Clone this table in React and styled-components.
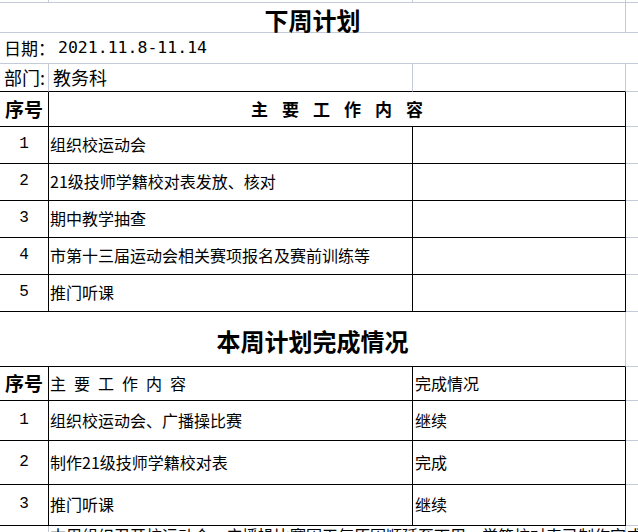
import React from 'react';
import styled, { createGlobalStyle } from 'styled-components';

const GRID = '#c5cad8';
const INK = '#000';

const GlobalStyle = createGlobalStyle`
  html, body {
    margin: 0;
    padding: 0;
    overflow: hidden;
    background: #fff;
  }
  body {
    font-family: "Noto Sans CJK SC", "Noto Sans", sans-serif;
    color: #000;
  }
`;

const edge = (v) => (v === 'k' ? `1px solid ${INK}` : v === 'g' ? `1px solid ${GRID}` : 'none');

// columns A | B | C | D of the sheet, rows at their sheet heights
const Sheet = styled.div`
  display: grid;
  grid-template-columns: 49px 364px 213px 1fr;
  grid-template-rows: 3px 30px 31px 28px 35px repeat(5, 37px) 55px 34px 40px 44px 41px 7px;
  width: 638px;
  height: 532px;
  overflow: hidden;
`;

const Cell = styled.div`
  box-sizing: border-box;
  grid-column: span ${(p) => p.$span || 1};
  border-right: ${(p) => edge(p.$r)};
  border-bottom: ${(p) => edge(p.$b)};
  display: flex;
  align-items: center;
  min-width: 0;
  overflow: hidden;
  white-space: nowrap;
  font-size: 16px;
  line-height: 1.2;
`;

const Filler = styled(Cell)``;

const SheetTitle = styled(Cell)`
  justify-content: center;
  padding-top: ${(p) => p.$top || 0}px;
  overflow: visible;
  font-size: 24px;
  font-weight: 700;
  line-height: 1.3;
`;

const InfoCell = styled(Cell)`
  padding-left: ${(p) => p.$pad || 0}px;
  font-size: ${(p) => p.$size || 17}px;
`;

const DateText = styled.span`
  margin-left: 3px;
  font-family: "DejaVu Sans Mono", "Liberation Mono", monospace;
  font-size: 16.5px;
`;

const HeadCell = styled(Cell)`
  justify-content: center;
  font-size: 19px;
  font-weight: 700;
`;

const SpacedHead = styled(HeadCell)`
  padding-left: 14px;
  font-size: 17px;
  letter-spacing: 14px;
`;

const PlainHead = styled(Cell)`
  padding-left: 1px;
  letter-spacing: ${(p) => p.$spacing || 0}px;
`;

const NumCell = styled(Cell)`
  justify-content: center;
  font-family: "Liberation Mono", monospace;
  font-size: 16px;
`;

const TextCell = styled(Cell)`
  padding-left: ${(p) => p.$pad ?? 1}px;
`;

const NoteCell = styled(Cell)`
  align-items: flex-start;
  padding: 1px 0 0 1px;
  overflow: visible;
  line-height: 1;
`;

const nextWeek = [
  '组织校运动会',
  '21级技师学籍校对表发放、核对',
  '期中教学抽查',
  '市第十三届运动会相关赛项报名及赛前训练等',
  '推门听课',
];

const thisWeek = [
  { task: '组织校运动会、广播操比赛', state: '继续' },
  { task: '制作21级技师学籍校对表', state: '完成' },
  { task: '推门听课', state: '继续' },
];

export default function App() {
  return (
    <>
      <GlobalStyle />
      <Sheet>
        <Filler $r="g" $b="g" />
        <Filler $r="g" $b="g" />
        <Filler $r="g" $b="g" />
        <Filler $b="g" />

        <SheetTitle $span={3} $r="g" $b="g" $top={4}>下周计划</SheetTitle>
        <Filler $b="g" />

        <InfoCell $span={4} $b="g" $pad={4}>
          日期：<DateText>2021.11.8-11.14</DateText>
        </InfoCell>

        <InfoCell $r="g" $b="k" $pad={4} $size={18}>部门:</InfoCell>
        <InfoCell $r="g" $b="k" $pad={4} $size={18}>教务科</InfoCell>
        <Filler $r="g" $b="k" />
        <Filler $b="g" />

        <HeadCell $r="k" $b="k">序号</HeadCell>
        <SpacedHead $span={2} $r="k" $b="k">主要工作内容</SpacedHead>
        <Filler $b="g" />

        {nextWeek.map((task, i) => (
          <React.Fragment key={task}>
            <NumCell $r="k" $b="k">{i + 1}</NumCell>
            <TextCell $r="k" $b="k">{task}</TextCell>
            <Filler $r="k" $b="k" />
            <Filler $b="g" />
          </React.Fragment>
        ))}

        <SheetTitle $span={3} $r="g" $b="k" $top={3}>本周计划完成情况</SheetTitle>
        <Filler $b="g" />

        <HeadCell $r="k" $b="k">序号</HeadCell>
        <PlainHead $r="k" $b="k" $spacing={8}>主要工作内容</PlainHead>
        <TextCell $r="k" $b="k" $pad={2}>完成情况</TextCell>
        <Filler $b="g" />

        {thisWeek.map((row, i) => (
          <React.Fragment key={row.task}>
            <NumCell $r="k" $b="k">{i + 1}</NumCell>
            <TextCell $r="k" $b="k">{row.task}</TextCell>
            <TextCell $r="k" $b="k" $pad={2}>{row.state}</TextCell>
            <Filler $b="g" />
          </React.Fragment>
        ))}

        <Filler $r="g" />
        <NoteCell $span={2} $r="g">
          本周组织召开校运动会，广播操比赛因天气原因顺延至下周，学籍校对表已制作完成。
        </NoteCell>
        <Filler />
      </Sheet>
    </>
  );
}
